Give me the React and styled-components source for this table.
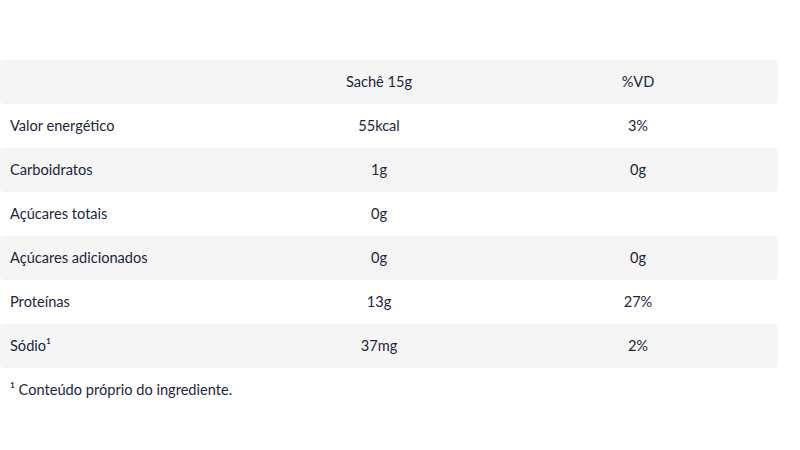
import React from 'react';
import styled, { createGlobalStyle } from 'styled-components';

const GlobalStyle = createGlobalStyle`
  html, body {
    margin: 0;
    padding: 0;
    background: #ffffff;
  }
  body {
    font-family: Lato, "Noto Sans", sans-serif;
    color: #1d2640;
  }
`;

const Wrapper = styled.div`
  width: 778px;
  padding-top: 60px;
`;

const Table = styled.div`
  display: flex;
  flex-direction: column;
`;

const Row = styled.div`
  display: grid;
  grid-template-columns: 260px 238px 280px;
  height: 44px;
  align-items: center;
  border-radius: 4px;
  background: ${(p) => (p.$shaded ? '#f5f5f5' : 'transparent')};
  font-size: 14.6px;
  line-height: 20px;
`;

const Label = styled.div`
  padding-left: 10px;
`;

const Value = styled.div`
  text-align: center;
`;

const Note = styled.p`
  margin: 12px 0 0;
  padding-left: 10px;
  font-size: 14.6px;
  line-height: 20px;
`;

const rows = [
  ['Valor energético', '55kcal', '3%'],
  ['Carboidratos', '1g', '0g'],
  ['Açúcares totais', '0g', ''],
  ['Açúcares adicionados', '0g', '0g'],
  ['Proteínas', '13g', '27%'],
  ['Sódio¹', '37mg', '2%'],
];

export default function App() {
  return (
    <>
      <GlobalStyle />
      <Wrapper>
        <Table>
          <Row $shaded>
            <Label />
            <Value>Sachê 15g</Value>
            <Value>%VD</Value>
          </Row>
          {rows.map((r, i) => (
            <Row key={r[0]} $shaded={i % 2 === 1}>
              <Label>{r[0]}</Label>
              <Value>{r[1]}</Value>
              <Value>{r[2]}</Value>
            </Row>
          ))}
        </Table>
        <Note>¹ Conteúdo próprio do ingrediente.</Note>
      </Wrapper>
    </>
  );
}
